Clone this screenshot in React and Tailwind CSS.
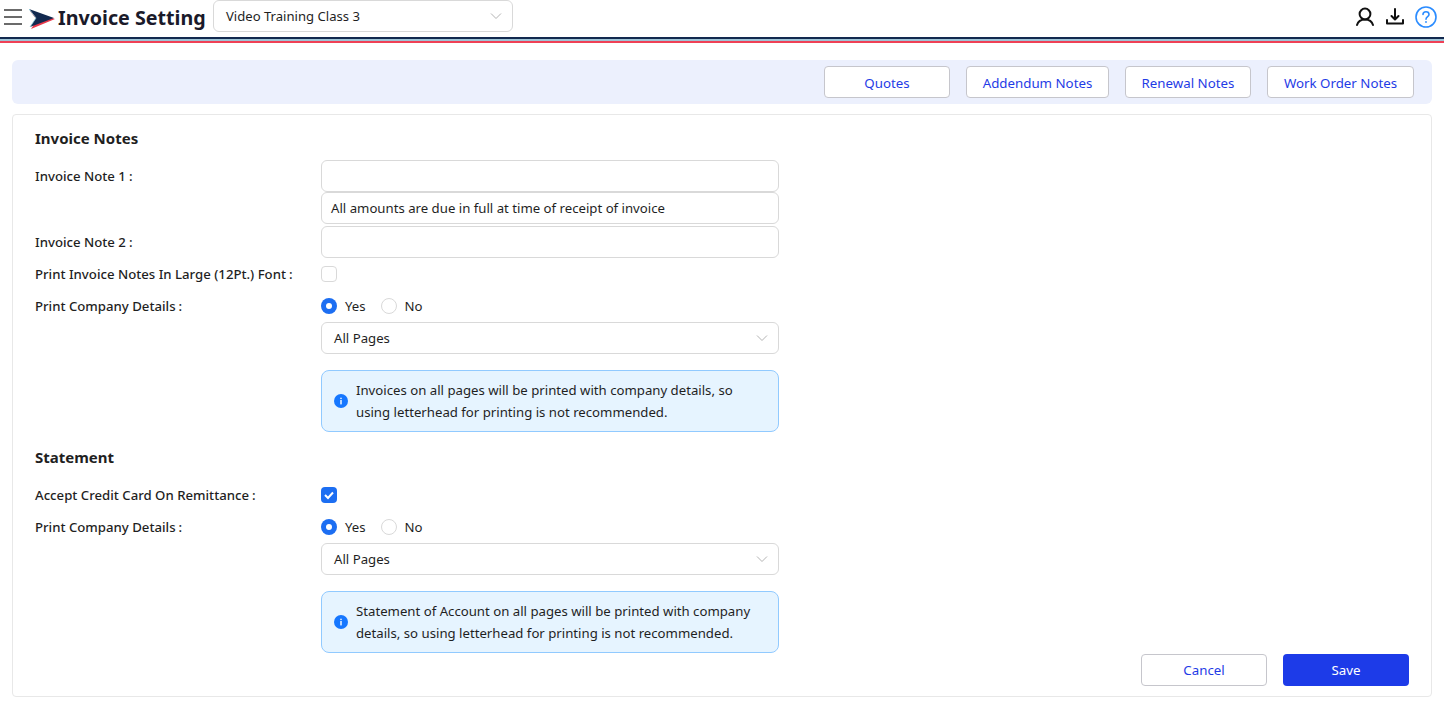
import React from "react";

function Chevron() {
  return (
    <svg width="12" height="12" viewBox="0 0 12 12" fill="none" stroke="#b3b3b3" strokeWidth="1">
      <path d="M1 3.5 L6 8.5 L11 3.5" />
    </svg>
  );
}

function Radio({ on, label }) {
  return (
    <span className="flex items-center">
      {on ? (
        <span className="w-4 h-4 rounded-full bg-[#1c6ef2] flex items-center justify-center">
          <span className="w-1.5 h-1.5 rounded-full bg-white" />
        </span>
      ) : (
        <span className="w-4 h-4 rounded-full border border-[#d9d9d9] bg-white" />
      )}
      <span className="ml-2 pt-[2px] text-[13.2px] text-[#1f1f1f]">{label}</span>
    </span>
  );
}

function Label({ children }) {
  return (
    <div className="w-[286px] shrink-0 text-[13.2px] font-medium text-[#1f1f1f] leading-8">
      {children}
      <span className="ml-[3px]">:</span>
    </div>
  );
}

function SelectBox() {
  return (
    <div className="w-[458px] h-8 rounded-md border border-[#d9d9d9] bg-white flex items-center justify-between pl-3 pr-[10px] text-[13.2px] text-[#1f1f1f]">
      <span className="pt-[2px]">All Pages</span>
      <Chevron />
    </div>
  );
}

function Alert({ children }) {
  return (
    <div className="w-[458px] h-[62px] mt-4 rounded-lg border border-[#91caff] bg-[#e6f4ff] flex items-center pl-3 pr-3 text-[13.2px] leading-[22px] text-[#1f1f1f]">
      <svg width="14" height="14" viewBox="0 0 14 14" className="shrink-0 mr-2">
        <circle cx="7" cy="7" r="7" fill="#1677ff" />
        <rect x="6.3" y="6" width="1.4" height="4.4" fill="#fff" />
        <rect x="6.3" y="3.7" width="1.4" height="1.4" fill="#fff" />
      </svg>
      <div className="w-[410px]">{children}</div>
    </div>
  );
}

function RadioRow() {
  return (
    <div className="flex h-8">
      <Label>Print Company Details</Label>
      <div className="flex items-center gap-[15px]">
        <Radio on label="Yes" />
        <Radio label="No" />
      </div>
    </div>
  );
}

function Tab({ w, children }) {
  return (
    <div className={`${w} h-8 rounded border border-[#c6c6cc] bg-white flex items-center justify-center text-[13.3px] text-[#1f3ce6]`}>
      <span className="pt-[3px]">{children}</span>
    </div>
  );
}

export default function App() {
  return (
    <div className="w-[1444px] h-[703px] bg-white overflow-hidden font-['Noto_Sans',sans-serif]">
      <header className="h-[37px] flex items-start">
        <svg width="18" height="18" viewBox="0 0 18 18" className="ml-1 mt-[8px] shrink-0" stroke="#6b6b6b" strokeWidth="2">
          <path d="M0 2 H18 M0 9 H18 M0 16 H18" />
        </svg>
        <svg width="26" height="22" viewBox="0 0 26 22" className="ml-[7px] mt-[8px] shrink-0">
          <path d="M1 2 L26 10 L2 20 L8 11 Z" fill="#e8394a" transform="translate(0 1)" />
          <path d="M0 1 L25 10 L1 19 L7 10 Z" fill="#12294f" />
          <path d="M0 1 L7 10 L1 19" fill="none" stroke="#8fd0de" strokeWidth="0.8" />
        </svg>
        <div className="ml-[3px] mt-[2px] text-[19.7px] leading-[32px] font-bold text-[#1a1a2a] w-[155px] whitespace-nowrap">Invoice Setting</div>
        <div className="w-[300px] h-8 rounded-md border border-[#d9d9d9] flex items-center justify-between pl-3 pr-[10px] text-[13.1px] text-[#1f1f1f]">
          <span className="pt-[2px]">Video Training Class 3</span>
          <Chevron />
        </div>
        <div className="ml-auto mr-[7px] mt-[6px] flex items-center gap-[8px]">
          <svg width="22" height="22" viewBox="0 0 22 22" fill="none" stroke="#111" strokeWidth="2" strokeLinecap="round">
            <circle cx="10" cy="8" r="5.4" />
            <path d="M2 19 C3 15.5 6 13.5 10 13.5 C14 13.5 17 15.5 18 19" />
          </svg>
          <svg width="22" height="22" viewBox="0 0 22 22" fill="none" stroke="#111" strokeWidth="2" strokeLinecap="round" strokeLinejoin="round">
            <path d="M10 3 V13 M6.5 10 L10 13.5 L13.5 10" />
            <path d="M2 14 V17.5 H18 V14" />
          </svg>
          <svg width="22" height="22" viewBox="0 0 22 22" fill="none" stroke="#2b8cff" strokeWidth="1.6">
            <circle cx="11" cy="11" r="10" />
            <path d="M8 8.5 C8 6.5 9.5 5.8 11 5.8 C12.8 5.8 14 6.9 14 8.4 C14 10.6 11 10.6 11 13.2" strokeLinecap="round" />
            <circle cx="11" cy="16" r="0.9" fill="#2b8cff" stroke="none" />
          </svg>
        </div>
      </header>
      <div className="h-[7px] flex flex-col">
        <div className="h-[2px] bg-[#12294f]" />
        <div className="h-[2px] bg-[#9ec4d6]" />
        <div className="h-[2px] bg-[#ef4056]" />
      </div>

      <main className="px-3 pt-4">
        <div className="h-11 rounded-md bg-[#ecf0fd] flex items-center justify-end gap-4 pr-[18px]">
          <Tab w="w-[126px]">Quotes</Tab>
          <Tab w="w-[143px]">Addendum Notes</Tab>
          <Tab w="w-[126px]">Renewal Notes</Tab>
          <Tab w="w-[147px]">Work Order Notes</Tab>
        </div>

        <section className="mt-[10px] h-[583px] rounded border border-[#e8e8e8] pl-[22px] pr-[22px] pt-[11px]">
          <h2 className="text-[15px] font-bold leading-6 text-[#1f1f1f] h-[34px]">Invoice Notes</h2>

          <div className="flex">
            <Label>Invoice Note 1</Label>
            <div className="w-[458px]">
              <div className="h-8 rounded-md border border-[#d9d9d9] bg-white" />
              <div className="h-8 rounded-md border border-[#d9d9d9] bg-white flex items-center px-[9px] text-[13.2px] text-[#1f1f1f]">
                <span className="pt-[2px]">All amounts are due in full at time of receipt of invoice</span>
              </div>
            </div>
          </div>
          <div className="flex mt-[2px]">
            <Label>Invoice Note 2</Label>
            <div className="w-[458px] h-8 rounded-md border border-[#d9d9d9] bg-white" />
          </div>
          <div className="flex h-8">
            <Label>Print Invoice Notes In Large (12Pt.) Font</Label>
            <div className="flex items-center">
              <span className="w-4 h-4 rounded border border-[#d9d9d9] bg-white" />
            </div>
          </div>
          <RadioRow />
          <div className="pl-[286px]">
            <SelectBox />
            <Alert>Invoices on all pages will be printed with company details, so using letterhead for printing is not recommended.</Alert>
          </div>

          <h2 className="text-[15px] font-bold leading-6 text-[#1f1f1f] h-[34px] mt-[13px]">Statement</h2>
          <div className="flex h-8">
            <Label>Accept Credit Card On Remittance</Label>
            <div className="flex items-center">
              <span className="w-4 h-4 rounded bg-[#1c6ef2] flex items-center justify-center">
                <svg width="12" height="12" viewBox="0 0 12 12" fill="none" stroke="#fff" strokeWidth="2">
                  <path d="M2 6 L5 9 L10 3.5" />
                </svg>
              </span>
            </div>
          </div>
          <RadioRow />
          <div className="pl-[286px]">
            <SelectBox />
            <Alert>Statement of Account on all pages will be printed with company details, so using letterhead for printing is not recommended.</Alert>
          </div>
          <div className="flex justify-end gap-4 mt-px">
            <div className="w-[126px] h-8 rounded border border-[#c6c6cc] bg-white flex items-center justify-center text-[13.3px] text-[#1f3ce6]">
              <span className="pt-[2px]">Cancel</span>
            </div>
            <div className="w-[126px] h-8 rounded bg-[#1d3be8] flex items-center justify-center text-[13.3px] text-white">
              <span className="pt-[2px]">Save</span>
            </div>
          </div>
        </section>
      </main>
    </div>
  );
}
